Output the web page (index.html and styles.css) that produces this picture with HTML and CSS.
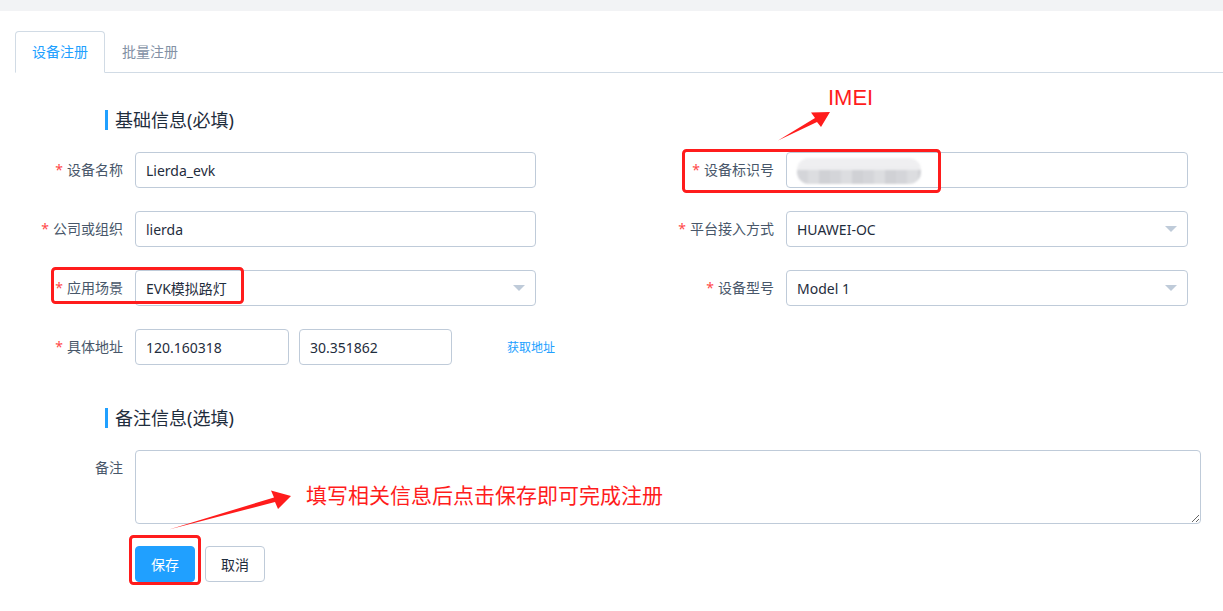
FILE: index.html
```html
<!DOCTYPE html>
<html lang="zh-CN">
<head>
<meta charset="utf-8">
<title>设备注册</title>
<link rel="stylesheet" href="styles.css">
</head>
<body>
<div class="topband"></div>
<main class="page">
  <nav class="tabs">
    <div class="tab active">设备注册</div>
    <div class="tab">批量注册</div>
  </nav>

  <h3 class="section-title">基础信息(必填)</h3>

  <div class="form-grid">
    <div class="field">
      <label class="label"><span class="req">*</span>设备名称</label>
      <div class="control"><div class="input">Lierda_evk</div></div>
    </div>
    <div class="field">
      <label class="label"><span class="req">*</span>设备标识号</label>
      <div class="control"><div class="input"><span class="blur"></span></div></div>
    </div>
    <div class="field">
      <label class="label"><span class="req">*</span>公司或组织</label>
      <div class="control"><div class="input">lierda</div></div>
    </div>
    <div class="field">
      <label class="label"><span class="req">*</span>平台接入方式</label>
      <div class="control"><div class="input select">HUAWEI-OC<span class="caret"></span></div></div>
    </div>
    <div class="field">
      <label class="label"><span class="req">*</span>应用场景</label>
      <div class="control"><div class="input select">EVK模拟路灯<span class="caret"></span></div></div>
    </div>
    <div class="field">
      <label class="label"><span class="req">*</span>设备型号</label>
      <div class="control"><div class="input select">Model 1<span class="caret"></span></div></div>
    </div>
    <div class="field">
      <label class="label"><span class="req">*</span>具体地址</label>
      <div class="control addr">
        <div class="input lng">120.160318</div>
        <div class="input lat">30.351862</div>
        <a class="link">获取地址</a>
      </div>
    </div>
  </div>

  <h3 class="section-title second">备注信息(选填)</h3>

  <div class="field remark">
    <label class="label">备注</label>
    <textarea class="textarea"></textarea>
  </div>

  <div class="actions">
    <button class="btn primary">保存</button>
    <button class="btn">取消</button>
  </div>
</main>

<svg class="annot" width="1223" height="611" viewBox="0 0 1223 611" xmlns="http://www.w3.org/2000/svg">
  <rect x="683.5" y="150.5" width="256" height="41" rx="3" fill="none" stroke="#ff1c1c" stroke-width="3"/>
  <rect x="52.5" y="268.5" width="190" height="34" rx="3" fill="none" stroke="#ff1c1c" stroke-width="3"/>
  <rect x="130.5" y="536.5" width="69" height="47" rx="3" fill="none" stroke="#ff1c1c" stroke-width="3"/>
  <polygon points="778,140.5 815,118 811,112.5 830,112 821,127 817,122" fill="#ff1c1c"/>
  <polygon points="169,529.5 274,497.5 271,490.5 291,496 278,509 275,502" fill="#ff1c1c"/>
</svg>
<div class="note imei">IMEI</div>
<div class="note tip">填写相关信息后点击保存即可完成注册</div>
</body>
</html>
```

FILE: styles.css
```css
* { box-sizing: border-box; }
html, body { margin: 0; padding: 0; }
body {
  position: relative;
  width: 1223px;
  height: 611px;
  overflow: hidden;
  background: #fff;
  font-family: "Noto Sans", "Noto Sans CJK SC", sans-serif;
  font-size: 14px;
  color: #1f2d3d;
}
.topband { height: 11px; background: #f2f3f5; }
.page { padding-left: 15px; padding-top: 20px; }

.tabs {
  display: flex;
  border-bottom: 1px solid #d1dbe5;
  height: 42px;
}
.tab {
  height: 42px;
  line-height: 40px;
  padding: 0 16px;
  border: 1px solid transparent;
  color: #8391a5;
  font-size: 14px;
}
.tab.active {
  color: #20a0ff;
  border-color: #d1dbe5;
  border-bottom-color: #fff;
  border-radius: 4px 4px 0 0;
  background: #fff;
}

.section-title {
  margin: 37px 0 0 90px;
  height: 20px;
  line-height: 20px;
  border-left: 3px solid #20a0ff;
  padding-left: 7px;
  font-size: 18px;
  font-weight: normal;
  color: #1f2d3d;
}
.section-title.second { margin-top: 43px; }

.form-grid {
  margin-top: 22px;
  display: grid;
  grid-template-columns: 521px 522px;
  column-gap: 130px;
  row-gap: 23px;
}
.field { display: flex; align-items: center; height: 36px; }
.label {
  flex: 0 0 120px;
  width: 120px;
  padding-right: 12px;
  text-align: right;
  color: #48576a;
  font-size: 14px;
  line-height: 36px;
  white-space: nowrap;
}
.req { color: #ff4949; margin-right: 4px; }
.control { flex: 1; display: flex; align-items: center; }
.input {
  flex: 1;
  position: relative;
  display: flex;
  align-items: center;
  height: 36px;
  padding: 0 10px;
  border: 1px solid #bfcbd9;
  border-radius: 4px;
  color: #1f2d3d;
  font-size: 14px;
  background: #fff;
}
.caret {
  margin-left: auto;
  width: 0; height: 0;
  border-left: 6px solid transparent;
  border-right: 6px solid transparent;
  border-top: 6px solid #bfcbd9;
}
.blur {
  display: block;
  width: 124px;
  height: 26px;
  margin-top: 2px;
  border-radius: 12px;
  background:
    linear-gradient(#f0f0f2 0, #eeeef0 45%, rgba(238,238,240,0) 45%),
    repeating-linear-gradient(90deg, #d4d5d9 0 11px, #dcdde0 11px 22px, #d0d1d5 22px 33px),
    #eeeef0;
  filter: blur(1px);
}
.addr { gap: 10px; }
.addr .lng { flex: 0 0 154px; }
.addr .lat { flex: 0 0 153px; }
.link {
  flex: none;
  margin-left: 45px;
  color: #20a0ff;
  font-size: 12px;
  text-decoration: none;
  white-space: nowrap;
}

.remark { margin-top: 22px; height: auto; align-items: flex-start; }
.textarea {
  display: block;
  width: 1066px;
  height: 74px;
  border: 1px solid #bfcbd9;
  border-radius: 4px;
  padding: 5px 10px;
  font-family: inherit;
  font-size: 14px;
  color: #1f2d3d;
  resize: vertical;
  margin: 0;
}

.actions { margin: 22px 0 0 120px; display: flex; gap: 10px; }
.btn {
  width: 60px;
  height: 36px;
  border: 1px solid #bfcbd9;
  border-radius: 4px;
  background: #fff;
  color: #1f2d3d;
  font-family: inherit;
  font-size: 14px;
  padding: 0;
}
.btn.primary { background: #20a0ff; border-color: #20a0ff; color: #fff; }

.annot { position: absolute; top: 0; left: 0; pointer-events: none; }
.note { position: absolute; color: #ff1c1c; white-space: nowrap; }
.note.imei {
  left: 828px; top: 86px;
  font-family: "Liberation Sans", sans-serif;
  font-size: 22px; line-height: 24px;
}
.note.tip {
  left: 306px; top: 479px;
  font-family: "Noto Sans CJK SC", sans-serif;
  font-size: 21px; line-height: 30px;
}
```
